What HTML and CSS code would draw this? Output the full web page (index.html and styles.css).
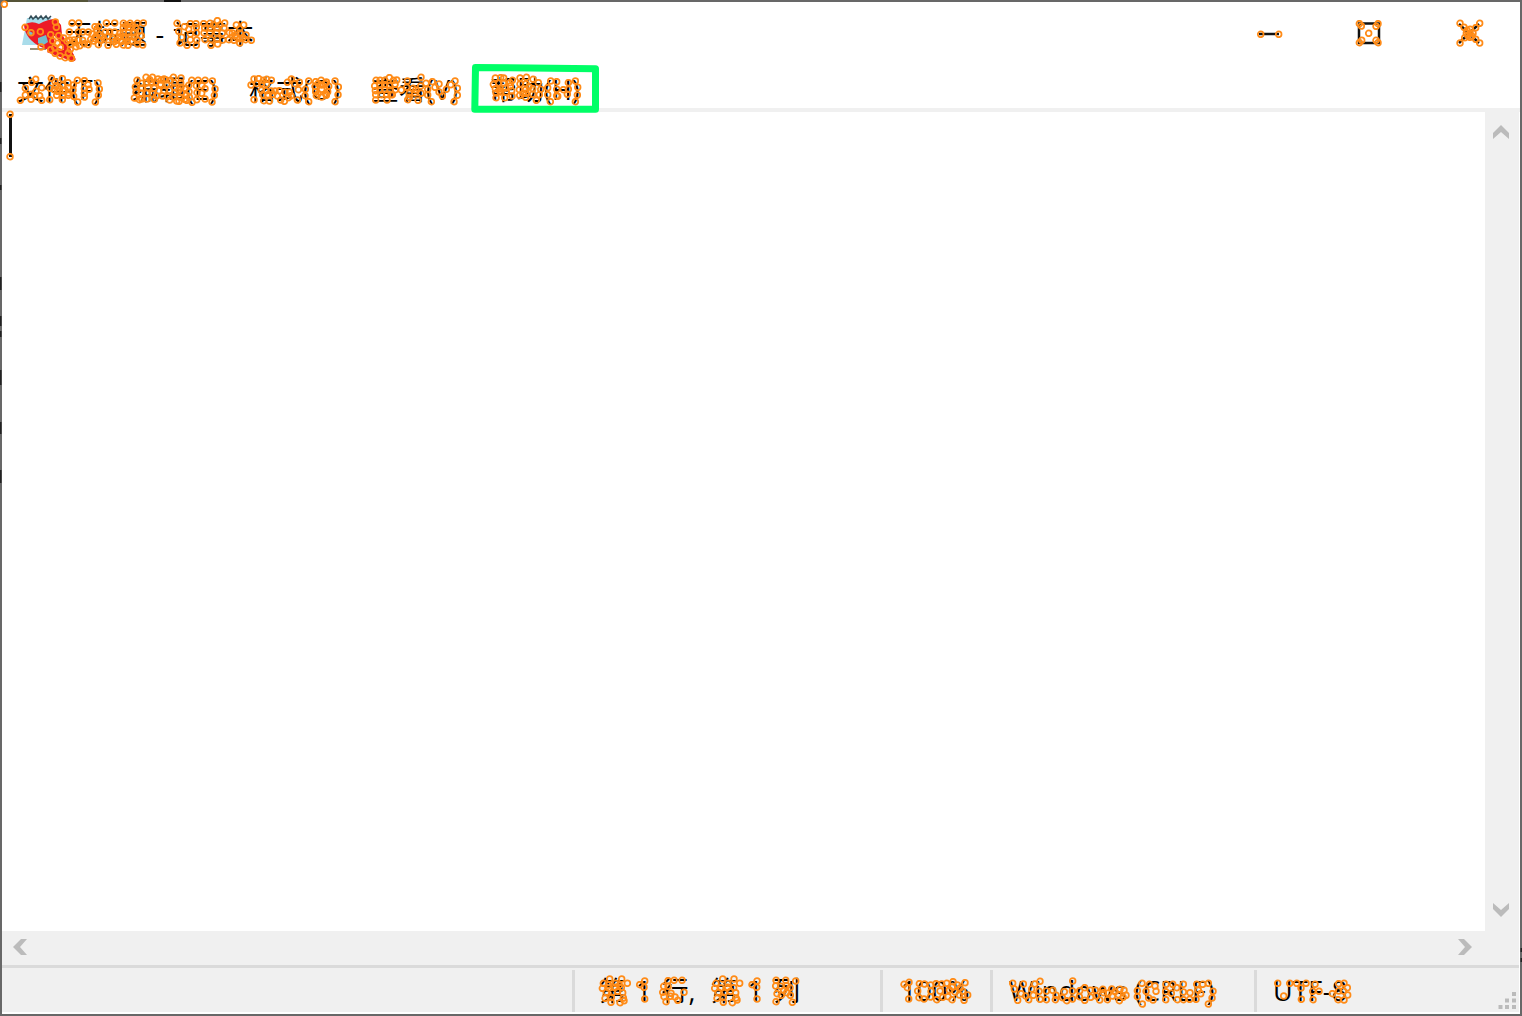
FILE: index.html
```html
<!DOCTYPE html>
<html lang="zh-CN">
<head>
<meta charset="utf-8">
<title>无标题 - 记事本</title>
<link rel="stylesheet" href="styles.css">
</head>
<body>
<div class="window">
  <header class="titlebar">
    <svg class="app-icon" width="40" height="40" viewBox="0 0 40 40">
      <path d="M6 5H30L31 32H1Z" fill="#a9dcea"/><path d="M18 21L24 19L27 27L21 29Z" fill="#65b6ca"/>
      <path d="M9 36H25" stroke="#9b9278" stroke-width="2"/>
      <path d="M8 6l2-3 2 3 3-3 2 3 3-3 2 3 3-3 2 3 3-3" fill="none" stroke="#344e58" stroke-width="1.5"/>
    </svg>
    <h1 class="title">无标题 - 记事本</h1>
    <div class="controls">
      <svg width="30" height="30" viewBox="0 0 30 30"><path d="M5 15H25"/></svg>
      <svg width="30" height="30" viewBox="0 0 30 30"><path d="M5 4.5H25V24H5Z"/></svg>
      <svg width="30" height="30" viewBox="0 0 30 30"><path d="M5 5L25 24M25 5L5 24"/></svg>
    </div>
  </header>
  <nav class="menu">
    <span class="file">文件(F)</span><span class="edit">编辑(E)</span><span class="format">格式(O)</span><span class="view">查看(V)</span><span>帮助(H)</span>
  </nav>
  <main class="editor">
    <div class="page"><div class="caret"></div></div>
    <div class="vscroll">
      <svg width="18" height="16" viewBox="0 0 18 16"><path d="M1 9L9 1L17 9V15L9 8L1 15Z"/></svg>
      <svg width="18" height="16" viewBox="0 0 18 16"><path d="M1 1L9 8L17 1V7L9 15L1 7Z"/></svg>
    </div>
  </main>
  <div class="hscroll">
    <svg width="16" height="18" viewBox="0 0 16 18"><path d="M9 1H15L8 9L15 17H9L1 9Z"/></svg>
    <svg width="16" height="18" viewBox="0 0 16 18"><path d="M1 1H7L15 9L7 17H1L8 9Z"/></svg>
  </div>
  <footer class="status">
    <span class="blank"></span>
    <span class="position">第 1 行,<span class="column"> 第 1 列</span></span>
    <span class="percent">100%</span>
    <span class="newline">Windows (CRLF)</span>
    <span class="encoding">UTF-8</span>
    <svg class="grip" width="20" height="20" viewBox="0 0 20 20"><path d="M14 1h4v4h-4zM7 7.5h4v4H7zM14 7.5h4v4h-4zM.5 14h4v4h-4zM7 14h4v4H7zM14 14h4v4h-4z"/></svg>
  </footer>
</div>
<svg class="annotations" width="1522" height="1016" viewBox="0 0 1522 1016">
  <defs>
    <marker id="dot" markerUnits="userSpaceOnUse" markerWidth="24" markerHeight="24" refX="12" refY="12"><circle cx="12" cy="12" r="8.6" fill="none" stroke="#ff8b17" stroke-width="5.2"/></marker>
  </defs>
  <path d="M24 25Q31 20 39 24Q48 19 56 19L61 25L62 34L74 55L73 59L56 53L41 47Q25 39 24 25Z" fill="#ed1b26"/>
  <path d="M29 31l4 2-2 3-4-3zM38 38l8-3 2 7-6 4-4-3z" fill="#72bdcd"/>
  <path d="M54 36l4 1 6 13-10-4z" fill="#fff4e8"/>
  <path d="M58 35L73 59L48 50" fill="none" stroke="#ed1b26" stroke-width="5" stroke-linejoin="round"/>
  <path class="frame" d="M475.5 67.5L595.5 68.8V109.3H474.8Z"/>
  <path d="M0 82V92M0 138V144M0 185V190M0 277V290M0 316V326M0 331V337M0 370V385M0 422V434M0 470V483M1522 948V952M1522 958V962" stroke="#222" stroke-width="3"/>
  <path d="M164 1H181" stroke="#111" stroke-width="2"/><path d="M5 1H88" stroke="#555438" stroke-width="2"/>
  <g transform="scale(.33333333)">
    <path class="points" d="M13 13L75 82L93 98L121 95L166 66L169 82L152 104L176 107L158 123L152 149L123 141L165 160L180 168L195 173L214 175L211 148L201 123L181 142L228 140L172 130L164 143L205 159L191 114"/>
    <path class="points" d="M216 69L236 69L208 96L235 96L248 96L265 96L209 120L222 120L235 120L248 121L210 134L224 128L239 137L253 131L264 134L285 80L296 80L290 89L276 102L287 109L299 104L280 123L295 134L303 121L319 69L344 69L316 96L329 96L344 96L312 117L324 109L337 117L324 136L342 125L349 133L370 70L390 70L412 70L430 69L370 83L389 83L407 83L370 98L386 98L402 99L418 93L358 111L371 110L387 111L402 112L350 121L366 124L381 124L397 123L412 121L370 135L384 136L412 132L428 135L424 107L401 96L378 115L272 118L285 116L306 110L360 100L379 76L397 77"/>
    <path class="points" d="M531 70L553 80L571 71L588 71L536 94L566 88L589 82L571 102L589 99L571 119L590 120L540 129L561 136L589 136L611 71L630 70L652 62L674 69L614 84L633 85L652 84L672 84L612 99L630 99L650 99L667 99L615 119L634 119L652 118L668 120L633 136L653 132L545 112L640 75L660 75L709 75L719 86L731 75L697 99L686 119L702 121L719 129L736 119L754 121L719 116L707 105L738 105L720 99L688 98L710 113L729 113"/>
    <path class="points" d="M76 265L76 285L61 301L93 298L93 283L108 274L107 238L125 263L125 301L104 287L119 287L95 247L154 235L150 265L149 299L165 245L187 236L204 248L168 257L187 256L205 263L172 274L189 273L205 279L170 286L188 286L205 286L187 299L162 269L178 264L195 270L232 241L220 255L219 270L221 289L233 306L253 242L264 254L253 266L267 268L253 280L253 291L294 249L298 267L295 286L286 306"/>
    <path class="points" d="M411 241L406 261L408 276L403 294L418 299L438 232L457 232L426 250L440 249L454 247L468 246L426 264L444 263L463 265L424 280L441 280L458 281L425 297L441 297L463 298L474 237L492 237L511 241L482 253L500 253L476 272L492 272L509 271L487 288L502 290L520 232L543 234L523 249L542 249L523 263L543 262L524 278L543 278L522 291L540 292L509 300L537 304L575 241L566 256L567 275L560 301L576 307L556 265L559 286L594 241L615 241L637 243L589 257L591 278L590 299L615 266L615 297L645 267L643 286L636 306L606 257L605 280L568 292L554 298M498 240L484 240L530 303L449 239L469 288L536 270"/>
    <g transform="translate(720 150)">
      <path class="points" d="M33 105L42 87L56 86L70 91L80 88L94 91L51 101L65 100L80 102L42 149L64 121L78 122L93 123L68 134L84 134L98 133L71 152L88 153L105 123L118 122L112 138L122 150L133 154L135 127L148 127L145 143L153 137L172 150L142 97L154 87L164 101L178 97L175 119L206 93L196 118L195 137L206 155L227 95L243 91L259 96L225 109L245 105L266 109L227 125L245 118L263 125L229 137L245 141L259 136L285 93L295 111L294 134L285 155L234 101L256 101L234 131L257 131"/>
      <path class="points" d="M408 91L420 91L434 91L448 83L460 91L404 108L420 105L434 104L449 107L465 103L406 122L420 120L434 119L450 120L466 119L407 134L424 134L440 133L457 134L407 150L441 150L470 90L543 82L502 93L484 120L500 112L519 115L542 108L508 130L525 129L543 130L508 142L534 151L558 100L563 118L563 135L574 155L577 95L597 102L607 138L632 104L645 93L652 115L652 136L642 155L585 112L597 126L619 118L527 120L453 134L503 149"/>
      <path class="points" d="M766 84L782 83L791 84L760 103L776 100L791 99L766 116L780 115L796 114L810 98L817 91L768 129L782 126L798 127L815 122L768 143L794 143L816 138L840 84L859 82L879 88L840 102L858 101L895 98L838 119L857 119L878 116L839 136L857 142L889 151L898 134L902 118L878 133L858 130L932 93L923 113L923 134L931 155L950 95L950 118L950 137L985 98L985 118L970 119L982 133L953 139L1006 93L1013 112L1012 135L1006 155M811 108L778 122L849 130L867 110"/>
    </g>
    <path class="points" d="M30 343V470"/>
    <g transform="translate(3690 0)"><path class="points" d="M92 103L146 103M388 71L394 78L444 71L438 79L416 100L388 128L395 121L444 128L438 121M690 70L702 82L711 91L720 88L737 83L749 70L709 99L720 99L729 100L704 113L690 129L713 106L726 109L737 118L749 129M720 112"/></g>
    <g transform="translate(1680 2880)">
      <path class="points" d="M130 70L149 57L167 70L185 57L202 70L127 85L146 84L166 82L184 83L139 97L157 98L173 94L188 98L135 115L154 112L190 114L153 127L180 128L192 122L145 75L178 76M239 74L254 63L252 82L254 117M324 62L342 61L366 61L308 97L318 125L324 79L311 79L345 111L353 121L372 97L331 109L333 100L312 110"/>
      <path class="points" d="M468 70L488 57L504 70L522 57L539 70L464 85L483 84L503 82L521 83L475 97L493 98L511 94L527 98L471 115L490 112L528 114L490 127L517 128L531 120M576 74L591 63L590 82L591 117M648 61L677 61L707 63L647 78L662 79L680 77L690 83L651 101L671 91L680 98L664 106L648 125L697 127L691 106"/>
      <path class="points" d="M1032 73L1047 67L1042 83L1046 117L1078 71L1093 72L1073 93L1077 113L1092 117L1112 75L1128 71L1145 72L1113 94L1111 111L1130 119L1148 112L1160 70L1179 65L1192 75L1168 90L1185 96L1164 110L1176 119L1215 68L1200 84L1198 105L1212 121L1223 105L1208 94L1140 93L1177 81"/>
    </g>
    <g transform="translate(2940 2880)">
      <path class="points" d="M98 70L130 72L103 87L113 121L123 101L137 108L146 119L160 106L155 87L164 72L180 64L177 94L180 118L199 119L199 93L218 91L228 106L226 119L253 95L247 113L260 122L277 117L277 93L278 63L299 92L314 83L331 91L298 110L314 121L332 112L346 91L349 108L359 120L370 98L382 119L395 87L397 108L420 88L432 91L415 104L429 112L418 122L438 106M404 95L385 99L368 88"/>
      <path class="points" d="M486 70L472 92L472 110L487 132L508 73L498 94L506 114L519 120L528 94L525 78L558 73L557 95L557 119L578 73L590 83L574 100L592 119L610 73L610 96L610 119L629 118L630 98L650 73L655 91L648 118L662 101L685 70L699 94L696 114L685 132M668 73"/>
      <path class="points" d="M893 70L911 108L929 70L950 70L963 84L978 70L964 118L1005 73L998 94L999 119L1017 94L1076 71L1092 70L1102 83L1076 93L1057 101L1074 119L1092 120L1103 105L1090 93"/>
    </g>
  </g>
</svg>
</body>
</html>
```
FILE: styles.css
```css
* { box-sizing: border-box; }
body {
  margin: 0;
  width: 1522px;
  height: 1016px;
  overflow: hidden;
  position: relative;
  font: 27px/36px "Open Sans", "Noto Sans CJK SC", sans-serif;
  color: #000;
}
.window {
  width: 1522px;
  height: 1016px;
  border: 2px solid #686868;
  background: #fff;
  display: flex;
  flex-direction: column;
}
.titlebar { height: 70px; display: flex; padding: 11px 36px 0 19px; flex: none; }
.title { margin: 3px 0 0 5px; font: inherit; word-spacing: 1.5px; white-space: nowrap; }
.controls { margin: 6px 0 0 auto; display: flex; gap: 70px; }
.controls path { fill: none; stroke: #111; stroke-width: 2.5; }
.menu { height: 40px; flex: none; display: flex; padding-left: 15px; border-bottom: 4px solid #f0f0f0; }
.menu span { flex: none; white-space: nowrap; }
.menu .file { width: 115px; }
.menu .edit { width: 117px; }
.menu .format { width: 123px; }
.menu .view { width: 118px; }
.editor { height: 819px; flex: none; display: flex; padding-right: 1px; }
.page { flex: 1; padding: 2px 0 0 7px; }
.caret { width: 3px; height: 43px; background: #111; }
.vscroll { width: 34px; background: #f0f0f0; display: flex; flex-direction: column; justify-content: space-between; padding: 12px 0 13px 7px; }
.vscroll path, .hscroll path, .grip path { fill: #bbb; }
.hscroll { height: 34px; flex: none; background: #f0f0f0; display: flex; justify-content: space-between; align-items: center; padding: 0 46px 2px 10px; margin-right: 1px; }
.status { height: 47px; flex: none; display: flex; background: #f0f0f0; border-top: 3px solid #dadada; margin-right: 1px; white-space: nowrap; }
.status > span { height: 42px; margin-top: 2px; padding-top: 3px; border-right: 3px solid #dadada; flex: none; }
.status .blank { width: 573px; }
.position { width: 308px; padding-left: 24px; word-spacing: 3px; }
.column { margin-left: 5px; }
.percent { width: 110px; padding-left: 18px; }
.newline { width: 264px; padding-left: 16px; letter-spacing: .45px; }
.status .encoding { padding-left: 16px; border-right: 0; letter-spacing: .4px; }
.grip { margin: 23px 1px 0 auto; }
.annotations { position: absolute; inset: 0; pointer-events: none; }
.frame { fill: none; stroke: #00ff66; stroke-width: 7; stroke-linejoin: round; }
.points { fill: none; marker-start: url(#dot); marker-mid: url(#dot); marker-end: url(#dot); }
```
